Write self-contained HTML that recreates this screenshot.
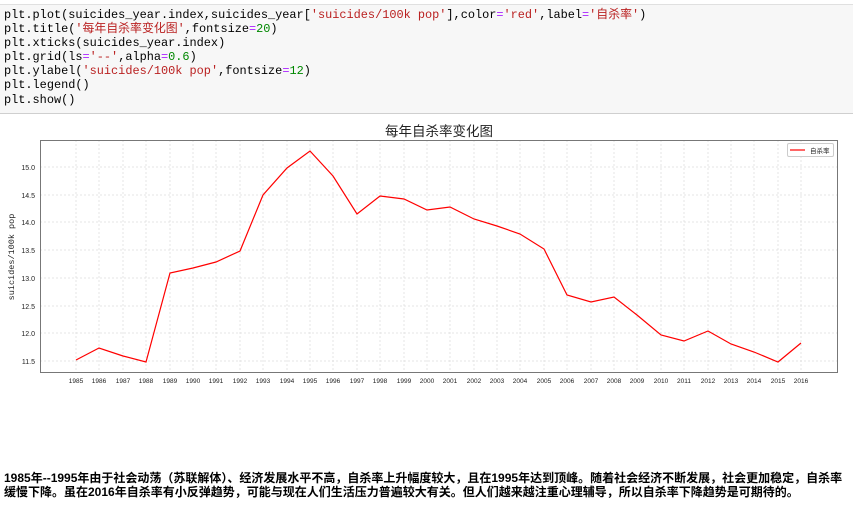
<!DOCTYPE html>
<html><head><meta charset="utf-8"><style>
body{margin:0;width:854px;height:514px;background:#fff;overflow:hidden;position:relative}
.code{position:absolute;left:0;top:4px;width:853px;height:108px;background:#f7f7f7;border-bottom:1px solid #cfcfcf;border-top:1px solid #e0e0e0}
.code pre{margin:0;padding:3px 0 0 4px;font-family:"Liberation Mono","Noto Sans CJK SC",monospace;font-size:11.9px;line-height:14.1px;color:#000}
.s{color:#ba2121}.o{color:#aa22ff}.n{color:#080}
.txt{position:absolute;left:4px;top:472px;font-family:"Liberation Sans","Noto Sans CJK SC",sans-serif;font-weight:bold;font-size:12px;line-height:13.5px;color:#000;letter-spacing:0px;width:850px;white-space:nowrap}
svg{position:absolute;left:0;top:0}
</style></head><body>
<div class="code"><pre>plt.plot(suicides_year.index,suicides_year[<span class="s">'suicides/100k pop'</span>],color<span class="o">=</span><span class="s">'red'</span>,label<span class="o">=</span><span class="s">'自杀率'</span>)
plt.title(<span class="s">'每年自杀率变化图'</span>,fontsize<span class="o">=</span><span class="n">20</span>)
plt.xticks(suicides_year.index)
plt.grid(ls<span class="o">=</span><span class="s">'--'</span>,alpha<span class="o">=</span><span class="n">0.6</span>)
plt.ylabel(<span class="s">'suicides/100k pop'</span>,fontsize<span class="o">=</span><span class="n">12</span>)
plt.legend()
plt.show()</pre></div>
<svg width="854" height="514" xmlns="http://www.w3.org/2000/svg" font-family="Liberation Sans,Noto Sans CJK SC,sans-serif">
<text x="439" y="136" font-size="13.5" text-anchor="middle" fill="#222">每年自杀率变化图</text>
<g stroke="#dcdcdc" stroke-width="0.7" stroke-dasharray="2,2">
<line x1="40" x2="838" y1="167" y2="167"/><line x1="40" x2="838" y1="195" y2="195"/><line x1="40" x2="838" y1="222" y2="222"/><line x1="40" x2="838" y1="250" y2="250"/><line x1="40" x2="838" y1="278" y2="278"/><line x1="40" x2="838" y1="306" y2="306"/><line x1="40" x2="838" y1="333" y2="333"/><line x1="40" x2="838" y1="361" y2="361"/>
<line x1="76" x2="76" y1="140" y2="372"/><line x1="99" x2="99" y1="140" y2="372"/><line x1="123" x2="123" y1="140" y2="372"/><line x1="146" x2="146" y1="140" y2="372"/><line x1="170" x2="170" y1="140" y2="372"/><line x1="193" x2="193" y1="140" y2="372"/><line x1="216" x2="216" y1="140" y2="372"/><line x1="240" x2="240" y1="140" y2="372"/><line x1="263" x2="263" y1="140" y2="372"/><line x1="287" x2="287" y1="140" y2="372"/><line x1="310" x2="310" y1="140" y2="372"/><line x1="333" x2="333" y1="140" y2="372"/><line x1="357" x2="357" y1="140" y2="372"/><line x1="380" x2="380" y1="140" y2="372"/><line x1="404" x2="404" y1="140" y2="372"/><line x1="427" x2="427" y1="140" y2="372"/><line x1="450" x2="450" y1="140" y2="372"/><line x1="474" x2="474" y1="140" y2="372"/><line x1="497" x2="497" y1="140" y2="372"/><line x1="520" x2="520" y1="140" y2="372"/><line x1="544" x2="544" y1="140" y2="372"/><line x1="567" x2="567" y1="140" y2="372"/><line x1="591" x2="591" y1="140" y2="372"/><line x1="614" x2="614" y1="140" y2="372"/><line x1="637" x2="637" y1="140" y2="372"/><line x1="661" x2="661" y1="140" y2="372"/><line x1="684" x2="684" y1="140" y2="372"/><line x1="708" x2="708" y1="140" y2="372"/><line x1="731" x2="731" y1="140" y2="372"/><line x1="754" x2="754" y1="140" y2="372"/><line x1="778" x2="778" y1="140" y2="372"/><line x1="801" x2="801" y1="140" y2="372"/>
</g>
<rect x="40.5" y="140.5" width="797" height="232" fill="none" stroke="#777" stroke-width="1"/>
<polyline fill="none" stroke="#f00" stroke-width="1.2" points="76,360 99,348 123,356 146,362 170,273 193,268 216,262 240,251 263,195 287,168 310,151 333,176 357,214 380,196 404,199 427,210 450,207 474,219 497,226 520,234 544,249 567,295 591,302 614,297 637,315 661,335 684,341 708,331 731,344 754,352 778,362 801,343"/>
<g font-size="7" fill="#222" text-anchor="end">
<text x="35" y="170">15.0</text><text x="35" y="198">14.5</text><text x="35" y="225">14.0</text><text x="35" y="253">13.5</text><text x="35" y="281">13.0</text><text x="35" y="309">12.5</text><text x="35" y="336">12.0</text><text x="35" y="364">11.5</text>
</g>
<g font-size="6.5" fill="#222" text-anchor="middle">
<text x="76" y="383">1985</text><text x="99" y="383">1986</text><text x="123" y="383">1987</text><text x="146" y="383">1988</text><text x="170" y="383">1989</text><text x="193" y="383">1990</text><text x="216" y="383">1991</text><text x="240" y="383">1992</text><text x="263" y="383">1993</text><text x="287" y="383">1994</text><text x="310" y="383">1995</text><text x="333" y="383">1996</text><text x="357" y="383">1997</text><text x="380" y="383">1998</text><text x="404" y="383">1999</text><text x="427" y="383">2000</text><text x="450" y="383">2001</text><text x="474" y="383">2002</text><text x="497" y="383">2003</text><text x="520" y="383">2004</text><text x="544" y="383">2005</text><text x="567" y="383">2006</text><text x="591" y="383">2007</text><text x="614" y="383">2008</text><text x="637" y="383">2009</text><text x="661" y="383">2010</text><text x="684" y="383">2011</text><text x="708" y="383">2012</text><text x="731" y="383">2013</text><text x="754" y="383">2014</text><text x="778" y="383">2015</text><text x="801" y="383">2016</text>
</g>
<text transform="translate(14,257) rotate(-90)" font-size="8.5" text-anchor="middle" fill="#222" font-family="Liberation Mono,monospace">suicides/100k pop</text>
<rect x="787.5" y="143.5" width="46" height="13" rx="1.5" fill="#fff" stroke="#ccc"/>
<line x1="790" x2="805" y1="150" y2="150" stroke="#f00" stroke-width="1.2"/>
<text x="810" y="153" font-size="6.5" fill="#222">自杀率</text>
</svg>
<div class="txt">1985年--1995年由于社会动荡（苏联解体）、经济发展水平不高，自杀率上升幅度较大，且在1995年达到顶峰。随着社会经济不断发展，社会更加稳定，自杀率<br>缓慢下降。虽在2016年自杀率有小反弹趋势，可能与现在人们生活压力普遍较大有关。但人们越来越注重心理辅导，所以自杀率下降趋势是可期待的。</div>
</body></html>
